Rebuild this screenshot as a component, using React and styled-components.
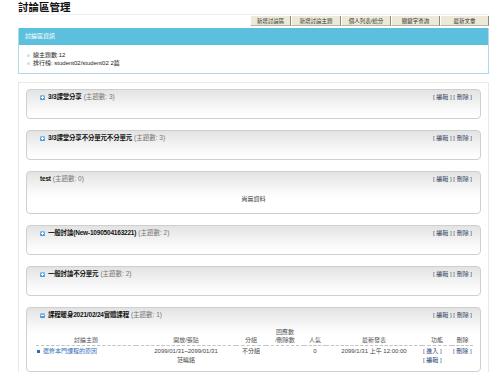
import React from 'react';
import styled, { createGlobalStyle } from 'styled-components';

const GlobalStyle = createGlobalStyle`
  body {
    margin: 0;
    background: #fff;
    font-family: "Liberation Sans", "Noto Sans CJK TC", sans-serif;
    color: #222;
  }
`

const Page = styled.div`
  padding: 2px 10px 0 18px;
  font-size: 6.5px;
`

const Title = styled.h1`
  margin: 0;
  font-size: 10.5px;
  line-height: 11px;
  font-weight: bold;
  color: #111;
  padding-bottom: 1px;
  border-bottom: 1px solid #ececec;
`

const Toolbar = styled.div`
  display: flex;
  justify-content: flex-end;
  margin-top: 1px;
  height: 11px;
`

const ToolButton = styled.div`
  width: ${p => p.w}px;
  height: 10px;
  line-height: 10px;
  background: #ece9d8;
  border-right: 1px solid #8d8a7c;
  border-bottom: 1px solid #b8b5a6;
  border-left: 1px solid #fff;
  text-align: center;
  font-size: 5.5px;
  color: #333;
  box-sizing: border-box;
`

const InfoPanel = styled.div`
  margin-top: 1px;
  border: 1px solid #aadcec;
  border-top: none;
`

const InfoHeader = styled.div`
  height: 17px;
  line-height: 17px;
  background: #5cbfdd;
  color: #fff;
  padding-left: 6px;
  font-size: 6px;
`

const InfoList = styled.ul`
  list-style: none;
  margin: 0;
  padding: 6px 0 6px 8px;
`

const InfoItem = styled.li`
  display: flex;
  align-items: center;
  gap: 3px;
  line-height: 8px;
  font-size: 6px;
  &::before {
    content: "";
    width: 3px;
    height: 3px;
    border-radius: 50%;
    background: #d4dde8;
  }
`

const Container = styled.div`
  margin-top: 8px;
  border: 1px solid #e9e9e9;
  border-bottom: none;
  padding: 6px 7px 0;
  display: flex;
  flex-direction: column;
  gap: 11px;
`

const Box = styled.div`
  border: 1px solid #cfcfcf;
  border-radius: 4px;
  background: linear-gradient(#e3e3e3 0px, #fafafa 20px, #fff 28px);
  min-height: 28px;
`

const BoxHeader = styled.div`
  display: flex;
  justify-content: space-between;
  align-items: center;
  padding: 3px 8px 0 13px;
  line-height: 8px;
`

const BoxTitle = styled.div`
  display: flex;
  align-items: center;
  gap: 2px;
  font-size: 6.5px;
  b { color: #111; letter-spacing: -0.2px; }
  span { color: #777; }
`

const Toggle = styled.span`
  display: inline-block;
  width: 5px;
  height: 5px;
  border-radius: 1px;
  background: linear-gradient(#8cc4ee, #3f8fd6);
  position: relative;
  margin-right: 1px;
  &::before, &::after {
    content: "";
    position: absolute;
    background: #fff;
  }
  &::before { left: 1px; right: 1px; top: 2px; height: 1px; }
  &::after {
    display: ${p => (p.open ? 'none' : 'block')};
    top: 1px; bottom: 1px; left: 2px; width: 1px;
  }
`

const Actions = styled.div`
  font-size: 6px;
  color: #3a4a66;
  white-space: pre;
`

const Empty = styled.div`
  text-align: center;
  padding: 11px 0 10px;
  font-size: 6px;
  color: #333;
`

const Table = styled.table`
  width: calc(100% - 17px);
  margin: 10px 8px 5px 9px;
  border-collapse: collapse;
  table-layout: fixed;
  font-size: 6px;
  color: #444;
`

const Th = styled.th`
  font-weight: normal;
  color: #555;
  text-align: ${p => p.align || 'center'};
  line-height: 7.5px;
  padding: 0 0 1px;
  border-bottom: 1px dashed #c4c4c4;
  vertical-align: bottom;
`

const Td = styled.td`
  text-align: ${p => p.align || 'center'};
  vertical-align: top;
  line-height: 9px;
  padding-top: 1px;
`

const TopicLink = styled.a`
  color: #2c6fb6;
  text-decoration: none;
  display: flex;
  align-items: center;
  gap: 3px;
  &::before {
    content: "";
    width: 3px;
    height: 3px;
    background: #2c6fb6;
  }
`

const RowActions = styled.div`
  color: #2e4a7a;
  text-align: left;
  line-height: 9px;
`

const categories = [
  { name: '3/3課堂分享', count: 3 },
  { name: '3/3課堂分享不分單元不分單元', count: 3 },
  { name: 'test', count: 0, noToggle: true, empty: true },
  { name: '一般討論(New-1090504163221)', count: 2 },
  { name: '一般討論不分單元', count: 2 },
]

const buttons = [
  ['新增討論區', 41],
  ['新增討論主題', 50],
  ['個人列表/給分', 50],
  ['關鍵字查詢', 49],
  ['最新文章', 49],
]

function Category({ name, count, noToggle, open, children }) {
  return (
    <Box>
      <BoxHeader>
        <BoxTitle>
          {!noToggle && <Toggle open={open} />}
          <b>{name}</b>
          <span>(主題數: {count})</span>
        </BoxTitle>
        <Actions>[ 編輯 ] [ 刪除 ]</Actions>
      </BoxHeader>
      {children}
    </Box>
  )
}

export default function App() {
  return (
    <>
      <GlobalStyle />
      <Page>
        <Title>討論區管理</Title>
        <Toolbar>
          {buttons.map(([label, w]) => (
            <ToolButton key={label} w={w}>{label}</ToolButton>
          ))}
        </Toolbar>
        <InfoPanel>
          <InfoHeader>討論區資訊</InfoHeader>
          <InfoList>
            <InfoItem>總主題數:12</InfoItem>
            <InfoItem>排行榜: student02/student02 2篇</InfoItem>
          </InfoList>
        </InfoPanel>
        <Container>
          {categories.map(c => (
            <Category key={c.name} {...c}>
              {c.empty && <Empty>尚無資料</Empty>}
            </Category>
          ))}
          <Category name="課程暖身2021/02/24實體課程" count={1} open>
            <Table>
              <colgroup>
                <col style={{ width: '100px' }} />
                <col style={{ width: '100px' }} />
                <col style={{ width: '30px' }} />
                <col style={{ width: '38px' }} />
                <col style={{ width: '22px' }} />
                <col style={{ width: '96px' }} />
                <col style={{ width: '30px' }} />
                <col style={{ width: '21px' }} />
              </colgroup>
              <thead>
                <tr>
                  <Th>討論主題</Th>
                  <Th>開放/張貼</Th>
                  <Th>分組</Th>
                  <Th>回應數<br />/刪除數</Th>
                  <Th>人氣</Th>
                  <Th>最新發表</Th>
                  <Th>功能</Th>
                  <Th>刪除</Th>
                </tr>
              </thead>
              <tbody>
                <tr>
                  <Td align="left"><TopicLink href="#">選修本門課程的原因</TopicLink></Td>
                  <Td>2099/01/31~2099/01/31<br />范曉銘</Td>
                  <Td>不分組</Td>
                  <Td></Td>
                  <Td>0</Td>
                  <Td>2099/1/31 上午 12:00:00</Td>
                  <Td align="left"><RowActions>[ 進入 ]<br />[ 編輯 ]</RowActions></Td>
                  <Td align="left"><RowActions>[ 刪除 ]</RowActions></Td>
                </tr>
              </tbody>
            </Table>
          </Category>
        </Container>
      </Page>
    </>
  )
}
